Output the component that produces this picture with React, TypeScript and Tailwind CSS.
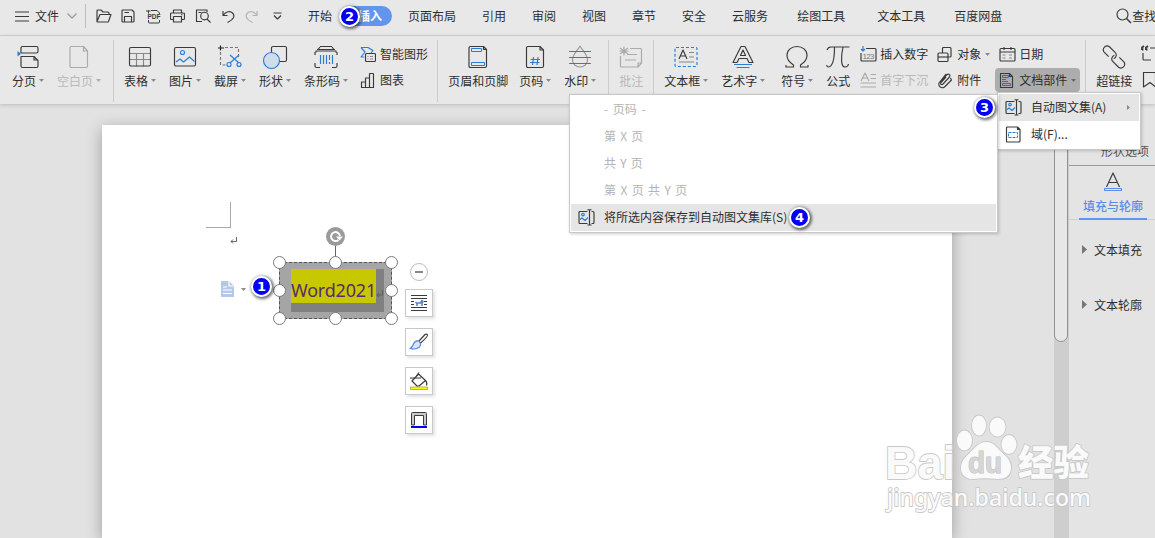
import React from "react";

type P = { children?: React.ReactNode; className?: string };

function Svg({ w, h, children, className = "" }: P & { w: number; h: number }) {
  return (
    <svg width={w} height={h} viewBox={`0 0 ${w} ${h}`} fill="none" stroke="#3a3a3a" strokeWidth="1.15" strokeLinejoin="round" className={`block shrink-0 ${className}`}>
      {children}
    </svg>
  );
}

const BLUE = "#2b7cd3";

function Arrow({ className = "" }: P) {
  return (
    <svg width="5" height="3" viewBox="0 0 5 3" className={`block shrink-0 ${className}`}>
      <path d="M0 0h5L2.500 3z" fill="#8a8a8a" />
    </svg>
  );
}

function Tool({ icon, label, arrow, disabled, className = "" }: { icon: React.ReactNode; label: string; arrow?: boolean; disabled?: boolean; className?: string }) {
  return (
    <div className={`flex shrink-0 flex-col items-center pt-[9px] ${className}`}>
      <div className="flex h-6 items-start justify-center">{icon}</div>
      <div className={`mt-[3px] flex h-[17px] items-center gap-[3px] leading-[17px] ${disabled ? "text-[#b9b9b9]" : ""}`}>
        <span>{label}</span>
        {arrow && <Arrow className={disabled ? "opacity-60" : ""} />}
      </div>
    </div>
  );
}

function Divider({ className = "" }: P) {
  return <div className={`mt-1 h-[62px] w-px shrink-0 bg-[#cccccc] ${className}`} />;
}

function SmallTool({ icon, label, arrow, className = "" }: { icon: React.ReactNode; label: string; arrow?: boolean; className?: string }) {
  return (
    <div className={`flex h-6 items-center ${className}`}>
      <div className="flex w-5 shrink-0 items-center">{icon}</div>
      <span className="-mt-[2px] leading-[17px]">{label}</span>
      {arrow && <Arrow className="ml-1" />}
    </div>
  );
}

function Badge({ n, className = "" }: { n: number; className?: string }) {
  return (
    <div className={`absolute z-30 flex size-[21px] items-center justify-center rounded-full border-2 border-white bg-[#0000f5] font-['DejaVu_Sans'] text-[13px] font-bold leading-none text-white shadow-[1px_1px_3px_1px_rgba(0,0,0,0.55)] ${className}`}>
      {n}
    </div>
  );
}

function TopBar() {
  return (
    <div className="flex h-9 shrink-0 items-start border-b border-[#d2d2d2]">
      <div className="flex h-8 w-[86px] shrink-0 items-center pl-[15px]">
        <Svg w={14} h={11}><path d="M0 1h14M0 5.500h14M0 10h14" /></Svg>
        <span className="ml-[6px]">文件</span>
        <Svg w={10} h={6} className="ml-[8px]"><path d="M.5.5 5 5 9.500.5" stroke="#999" /></Svg>
        <div className="ml-[8px] h-6 w-px shrink-0 bg-[#bdbdbd]" />
      </div>
      <div className="flex h-8 w-[222px] shrink-0 items-center pl-[10px]">
        <Svg w={16} h={14}><path d="M1 12.500V2q0-1 1-1h3l2 2h5q1 0 1 1v1M1 12.500 4 5.500h11l-2.500 7q-.2.500-1 .500H1.500q-.5 0-.5-.5z" /></Svg>
        <Svg w={14} h={14} className="ml-[9px]"><path d="M1 2q0-1 1-1h9l2 2v9q0 1-1 1H2q-1 0-1-1zM3.500 13V7.500h7V13M3.500 3.500H8" /></Svg>
        <svg width="15" height="15" viewBox="0 0 15 15" fill="none" stroke="#3a3a3a" strokeWidth="1" className="ml-[11px] block shrink-0">
          <path d="M2.500 4.500v-3M5 1.500h6L13.500 4v1M2.500 11v2q0 1 1 1h9q1 0 1-1v-2M0 2h4.500" />
          <text x="1.500" y="10" fontSize="6.500" fontWeight="bold" fill="#3a3a3a" stroke="none" textLength="13" fontFamily="Liberation Sans, sans-serif">PDF</text>
        </svg>
        <Svg w={15} h={14} className="ml-[9px]"><path d="M3.500 4V1h8v3M3 10.500H1.500q-1 0-1-1V5q0-1 1-1h12q1 0 1 1v4.500q0 1-1 1H12M3.500 7.500h8V13h-8zM11 5.700h1.500" /></Svg>
        <Svg w={16} h={14} className="ml-[10px]"><path d="M12 3V1H1.500v11.500H7M3.500 3.500h3" /><circle cx="9.500" cy="7" r="3.800" /><path d="m12 10 3.500 3.500" /></Svg>
        <Svg w={13} h={13} className="ml-[11px]"><path d="M1 1v4.500h4.500M1 5.500C4 1.500 8 .5 10.500 3s2 6-5 9.500" /></Svg>
        <Svg w={13} h={13} className="ml-[10px]"><path stroke="#b2b2b2" d="M12 1v4.500H7.500M12 5.500C9 1.500 5 .5 2.500 3s-2 6 5 9.500" /></Svg>
        <Svg w={9} h={8} className="ml-[15px]"><path d="M.5 1h8M1 3.500l3.500 3.500L8 3.500" /></Svg>
      </div>
      <div className="flex h-8 grow items-center whitespace-nowrap">
        <span>开始</span>
        <div className="ml-[11px] flex h-5 w-[49px] shrink-0 items-center justify-end rounded-full bg-[#6495ed] pr-[10px] font-bold text-white">插入</div>
        <div className="ml-4 flex gap-[26px]">
          <span>页面布局</span><span>引用</span><span>审阅</span><span>视图</span><span>章节</span><span>安全</span><span>云服务</span>
        </div>
        <span className="ml-[29px]">绘图工具</span>
        <span className="ml-8">文本工具</span>
        <span className="ml-[29px]">百度网盘</span>
        <Svg w={16} h={16} className="ml-[114px]"><circle cx="6.500" cy="6.500" r="5.500" /><path d="m10.500 10.500 4.500 4.500" strokeWidth="1.500" /></Svg>
        <span className="-mr-3">查找</span>
      </div>
    </div>
  );
}

function AutoTextIcon() {
  return (
    <Svg w={17} h={17}>
      <path d="M9.500 2.500H2q-1 0-1 1v10q0 1 1 1h7.500M13.500 2.500h1.500q1 0 1 1v10q0 1-1 1h-1.500M9.500.7h4M9.500 16h4M11.500.7V16" />
      <circle cx="5" cy="5.500" r="1.300" stroke={BLUE} />
      <path d="m2 10.500 2-1.500 3 2.500L10 8.500" stroke={BLUE} />
    </Svg>
  );
}

function Ribbon() {
  return (
    <div className="relative z-10 flex h-[68px] shrink-0 items-start overflow-hidden whitespace-nowrap bg-[#e8e8e8] pl-3 shadow-[0_1px_4px_rgba(0,0,0,0.18)]">
      <div className="flex shrink-0 gap-[13px]">
        <Tool label="分页" arrow icon={<Svg w={23} h={24}><path d="M4 8V3q0-1.500 1.500-1.500h14Q21 1.500 21 3v3.500Q21 8 19.500 8H4M4 11.500h13l4 4V21q0 1.500-1.500 1.500h-14Q4 22.500 4 21zM17 11.500V15h4" /><path d="M.5 6v5.500l3.500-2.700z" fill={BLUE} stroke="none" /></Svg>} />
        <Tool label="空白页" arrow disabled icon={<Svg w={20} h={24}><path stroke="#aaa" d="M1 3q0-1.500 1.500-1.500h12L18.500 6v15q0 1.500-1.500 1.500H2.500Q1 22.500 1 21zM14.500 1.500V6h4" /></Svg>} />
      </div>
      <Divider className="ml-3" />
      <div className="ml-[10px] flex shrink-0 gap-[13px]">
        <Tool label="表格" arrow icon={<Svg w={24} h={24}><path d="M1 8.500h22M1 14.500h22M8.500 8.500v13M15.500 8.500v13" stroke="#888" /><rect x="1.500" y="2.500" width="21" height="18.500" rx="1.500" /></Svg>} />
        <Tool label="图片" arrow icon={<Svg w={24} h={24}><rect x="1.500" y="2.500" width="21" height="18.500" rx="1.500" /><circle cx="9.500" cy="7.500" r="2" stroke={BLUE} /><path d="m3 17 4-3 3.500 3 6-5 5 4.500" stroke={BLUE} /></Svg>} />
        <Tool label="截屏" arrow icon={<Svg w={26} h={24}><path d="M1 3h6M3.500.5v5" stroke="#222" /><path d="M8 2.500h13.500V12M3.500 7v13h7" stroke="#777" strokeDasharray="3 2" /><path d="m13 10 9 8M22 10l-9 8" stroke={BLUE} /><circle cx="12" cy="19.500" r="2" stroke={BLUE} /><circle cx="22" cy="19.500" r="2" stroke={BLUE} /></Svg>} />
        <Tool label="形状" arrow icon={<Svg w={26} h={25}><rect x="9.500" y="1.500" width="15" height="15" rx="1.500" /><circle cx="9.500" cy="15.500" r="8" stroke={BLUE} fill="#cfdcea" /></Svg>} />
        <Tool label="条形码" arrow icon={<Svg w={24} h={24}><path d="M2 7.500V6h20v1.500M3 4.500h18M6 2l-2 2.500M18 2l2 2.500M6 1.500h12M1 7v3M23 7v3M1 18v3q0 1.500 1.500 1.500H6M23 18v3q0 1.500-1.500 1.500H18" /><path d="M6.500 10v9M9.500 10v9M12.500 10v9M15.500 10v5M15.500 17v2M18.500 10v9" stroke={BLUE} /></Svg>} />
      </div>
      <div className="ml-3 flex shrink-0 flex-col gap-[2px] pt-[6px]">
        <SmallTool label="智能图形" icon={<Svg w={16} h={17}><path d="M1 1.500h7l5 3-2 2.500M1 1.500 5 6l-4 5h3" stroke={BLUE} /><rect x="5.500" y="7.500" width="10" height="8" rx="1" fill="#e8e8e8" /><path d="M7.500 10.500h1M10 10.500h3M7.500 13h1M10 13h3" stroke="#888" /></Svg>} />
        <SmallTool label="图表" icon={<Svg w={16} h={17}><path d="M1.500 15.500V10h4v5.500M5.500 15.500V6h4v9.500M9.500 15.500V2q0-.5.5-.5h3q.5 0 .5.500v13.500M1 15.500h13" /></Svg>} />
      </div>
      <Divider className="ml-[9px]" />
      <div className="ml-[10px] flex shrink-0 gap-[11px]">
        <Tool label="页眉和页脚" icon={<Svg w={20} h={24}><path d="M1 3q0-1.500 1.500-1.500h13l3 3V21q0 1.500-1.500 1.500H2.500Q1 22.500 1 21z" /><path d="M3.500 3.500h10v3h-10zM3.500 17.500h13v3h-13z" stroke={BLUE} strokeWidth="1" /><path d="M15.500 1.500v3h3" /></Svg>} />
        <Tool label="页码" arrow icon={<Svg w={20} h={24}><path d="M1.500 3q0-1.500 1.500-1.500h12L18.500 5v16q0 1.500-1.500 1.500H3Q1.500 22.500 1.500 21zM15 1.500V5h3.500" /><path d="m8.500 12-1 8M13 12l-1 8M5.500 14.500H15M5 17.500h9.500" stroke={BLUE} /></Svg>} />
        <Tool label="水印" arrow className="ml-[2px]" icon={<Svg w={24} h={24}><path d="M12 1C10 5 4.500 9.500 4.500 15c0 4 3.500 7 7.500 7s7.500-3 7.500-7C19.500 9.500 14 5 12 1z" stroke="#999" /><path d="M1 6.500h22M1 12.500h22M1 18.500h22" stroke={BLUE} /></Svg>} />
      </div>
      <Divider className="ml-3" />
      <Tool label="批注" disabled className="ml-[10px]" icon={<Svg w={24} h={24}><path stroke="#aaa" d="M11 3.500h10.500q1 0 1 1V18l-3.500 4H2.500q-1 0-1-1V11M19 22v-4h3.500M8 9.500h10M6 15h11M5 1.500v9M1 3l8 6M9 3 1 9M.5 6h9" /></Svg>} />
      <Divider className="ml-[10px]" />
      <Tool label="文本框" arrow className="ml-[10px]" icon={<Svg w={24} h={24}><rect x="1" y="2.500" width="22" height="19" rx="1" stroke={BLUE} strokeDasharray="3 2" /><path d="m5 14 4-9 4 9M6.500 11h5" /><path d="M15 7.500h5M15 12h5M5 17h15" stroke="#888" /></Svg>} />
      <Tool label="艺术字" arrow className="ml-[13px]" icon={<Svg w={24} h={24}><path d="M2 17.500 10 1.500h4l8 16h-4l-2-4H8l-2 4zM9.500 10.500h5L12 5z" /><path d="M3 19.500h18M5.500 22.500h13" stroke={BLUE} /></Svg>} />
      <Tool label="符号" arrow className="ml-4" icon={<Svg w={24} h={24}><path d="M1 20v2h7.500v-2C4.500 17.500 2 14.500 2 10.500 2 5 6.500 1.500 12 1.500S22 5 22 10.500c0 4-2.500 7-6.500 9.500v2H23v-2" /></Svg>} />
      <Tool label="公式" className="ml-[13px]" icon={<Svg w={24} h={24}><path d="M1 5q1-3 4-3h18.500M8.500 2C8.500 12 7 21.500 2.500 22q-2 0-1.500-2M17 2c-2 9-2.500 20 2 20q3 0 3.500-3" /></Svg>} />
      <div className="ml-[10px] flex shrink-0 flex-col gap-[2px] pt-[6px]">
        <SmallTool label="插入数字" icon={<Svg w={17} h={17}><path d="M6 2.500h9q1 0 1 1V14q0 1-1 1H2q-1 0-1-1V7" /><path d="M3 0v5M1 3l2 2 2-2" stroke={BLUE} /><text x="2.500" y="12.500" fontSize="8" fill="#777" stroke="none" textLength="12" fontFamily="Liberation Sans, sans-serif">123</text></Svg>} />
        <SmallTool className="text-[#b9b9b9]" label="首字下沉" icon={<Svg w={17} h={17}><path stroke="#aaa" d="m1 9 4-8 4 8M2.500 6h5M10.500 2.500H16M10.500 6.500H16M.5 11H16M.5 15H16" /></Svg>} />
      </div>
      <div className="ml-[9px] flex shrink-0 flex-col gap-[2px] pt-[6px]">
        <SmallTool label="对象" arrow icon={<Svg w={16} h={17}><path d="M5.500 7V2.500q0-1 1-1H13q1 0 1 1V10q0 1-1 1h-2" /><rect x="1" y="7" width="10" height="8.500" rx="1" /><path d="M1 11h10" /></Svg>} />
        <SmallTool label="附件" icon={<Svg w={16} h={17}><path d="m3 10 6.500-7c2-2 4.500 0 3 2L6 12c-1.500 1.500-3-.2-2-1.500l5-5.500M13.500 6l1 2-7 7c-3 2-6.500-.5-5.500-4L9 2" /></Svg>} />
      </div>
      <div className="ml-[5px] flex w-[85px] shrink-0 flex-col gap-[2px] pt-[6px]">
        <SmallTool className="pl-1" label="日期" icon={<Svg w={17} h={17}><rect x="1" y="2.500" width="15" height="12.500" rx="1" /><path d="M1 6h15M5 1v3M12 1v3" /><path d="M3.500 9h3M10 9h3M3.500 12h3M10 12h3" stroke="#888" /></Svg>} />
        <SmallTool className="rounded bg-[#adadad] pl-1 [&>svg]:brightness-75" label="文档部件" arrow icon={<Svg w={15} h={17}><path d="M1.500 1.500h9l3 3v11h-12zM10.500 1.500v3h3" /><path d="M3.500 3.500h6v2h-6zM3.500 11.500h8v2h-8zM3 7.500h4M3 9.500h6" stroke="#2470c8" strokeWidth="1" /></Svg>} />
      </div>
      <Divider className="ml-[5px]" />
      <Tool label="超链接" className="ml-[10px]" icon={<Svg w={24} h={24}><g transform="rotate(45 12 12)"><path d="M8 15.500H1.500a3.800 3.800 0 0 1 0-7.500h8a3.800 3.800 0 0 1 3.500 5.500M16 8.500h6.500a3.800 3.800 0 0 1 0 7.500h-8A3.800 3.800 0 0 1 11 10.500" /></g></Svg>} />
      <div className="ml-[9px] flex shrink-0 flex-col gap-[10px] pt-[9px]">
        <Svg w={20} h={17}><path d="M1 5V2.500L3 1M5 5V2.500L7 1M1 4.500h1.500M5 4.500h1.500" strokeWidth="1.800" /><path d="M9 3h10M2 8v6q0 1 1 1h7" /></Svg>
        <Svg w={20} h={17}><path d="M2.500.5h12V15l-5.500-4.500L2.500 15z" /></Svg>
      </div>
    </div>
  );
}

function MenuRow({ icon, children, className = "" }: P & { icon?: React.ReactNode }) {
  return (
    <div className={`flex h-[27px] items-center leading-[17px] ${className}`}>
      <div className="flex w-[26px] shrink-0">{icon}</div>
      <div className="-mt-[2px]">{children}</div>
    </div>
  );
}

function Handle({ className = "" }: P) {
  return <div className={`absolute size-[13px] rounded-full border border-[#7a7a7a] bg-white ${className}`} />;
}

function SelectedBox() {
  return (
    <div className="absolute left-[279px] top-[262px] h-[57px] w-[113px] border border-dashed border-[#555] bg-[#a5a5a5]">
      <div className="ml-[11px] mt-[6px] h-[43px] w-[93px] bg-[#808080]">
        <div className="flex h-[34px] items-end">
          <div className="h-[34px] w-[85px] bg-[#c8c800] pt-[8px] font-['Noto_Sans'] text-[18px] leading-[27px] tracking-[-0.2px] text-[#5b2a72]">Word2021</div>
          <svg width="8" height="10" viewBox="0 0 8 10" fill="none" stroke="#5d5d5d" className="mb-1"><path d="M6.500 1v5H1M3 4 1 6l2 2" /></svg>
        </div>
      </div>
      <div className="absolute left-[55px] top-[-17px] h-4 w-px bg-[#666]" />
      <svg width="19" height="19" viewBox="0 0 19 19" className="absolute left-[46px] top-[-36px]">
        <circle cx="9.500" cy="9.500" r="9.500" fill="#9a9a9a" />
        <path d="M12.500 13a4.500 4.500 0 1 1 1.500-4" fill="none" stroke="#fff" strokeWidth="2" />
        <path d="M10 9.500h7l-3.500 4z" fill="#fff" />
      </svg>
      <Handle className="left-[-7px] top-[-7px]" />
      <Handle className="left-[49px] top-[-7px]" />
      <Handle className="left-[105px] top-[-7px]" />
      <Handle className="left-[-7px] top-[21px]" />
      <Handle className="left-[105px] top-[21px]" />
      <Handle className="left-[-7px] top-[49px]" />
      <Handle className="left-[49px] top-[49px]" />
      <Handle className="left-[105px] top-[49px]" />
    </div>
  );
}

function FloatButton({ children }: P) {
  return <div className="flex size-7 items-center justify-center border border-[#c8c8c8] bg-white shadow-[2px_2px_3px_rgba(0,0,0,0.12)]">{children}</div>;
}

function FloatTools() {
  return (
    <div className="absolute left-[405px] top-[263px] flex flex-col items-center">
      <div className="flex size-[18px] items-center justify-center rounded-full border border-[#bcbcbc] bg-white"><div className="h-[2px] w-[8px] bg-[#888]" /></div>
      <div className="mt-2 flex flex-col gap-[11px]">
        <FloatButton>
          <Svg w={18} h={18}><path d="M1 1.500h16M1 4.500h16M1 7.500h3M14 7.500h3M1 10.500h3M14 10.500h3M1 13.500h16M1 16.500h16" strokeWidth="1" /><path d="M5 6.500h8.500V12.500H5z" fill="#fff" stroke="none" /><path d="m5.500 8 1 1h4l1.500-2.500 1 1-1 1.500v3M7 9v3" stroke="#5585d6" strokeWidth="1.600" /></Svg>
        </FloatButton>
        <FloatButton>
          <Svg w={20} h={18}><path d="m10 8 6-6.500q2-1 2.500.5t-7.500 8.500z" /><path d="M10 8q-4-1-5.500 3-1 3-3.500 4.500 6 1.500 9.500-1.500 1.500-2 1-3.500z" stroke="#5585d6" fill="#dae7fb" /></Svg>
        </FloatButton>
        <FloatButton>
          <Svg w={20} h={19}><path d="m9.500 2 7 6.500-6.500 5.500H8L3 9z" /><path d="M1 6h11M16.500 8.500q2 2 1 5M7.500 4 10 .5" /><rect x="1.500" y="15" width="17" height="2.500" fill="#ff0" stroke="#888800" strokeWidth=".6" /></Svg>
        </FloatButton>
        <FloatButton>
          <Svg w={18} h={18}><path strokeWidth="1" fill="#c9c9c9" d="M1.500 14V2.500q0-1 1-1h13q1 0 1 1V14h-3V4.500h-9V14z" /><path d="M1 16h16" stroke="#0000f5" strokeWidth="2" /></Svg>
        </FloatButton>
      </div>
    </div>
  );
}

function Watermark() {
  return (
    <svg width="220" height="110" viewBox="880 405 220 110" className="absolute left-[880px] top-[405px] z-20" fill="#fafafa" stroke="#c9c9c9" strokeWidth="1.800" paintOrder="stroke" strokeLinejoin="round">
      <text x="885" y="479" fontFamily="Liberation Sans, sans-serif" fontWeight="bold" fontSize="47" textLength="70" lengthAdjust="spacingAndGlyphs">Bai</text>
      <ellipse cx="964.500" cy="440.500" rx="7.500" ry="10" />
      <ellipse cx="979" cy="425.500" rx="7" ry="10" />
      <ellipse cx="997.500" cy="427" rx="8" ry="9.500" />
      <ellipse cx="1009" cy="444.500" rx="7.500" ry="9.500" />
      <path d="M986.500 442c8 0 11 7 18 13 10 8 9 24-6 24-7 0-16-1.500-24 0-14 1-18-13-8-23 7-6 11-14 20-14z" />
      <text x="968" y="473" fontFamily="Liberation Sans, sans-serif" fontWeight="bold" fontSize="29" textLength="34" lengthAdjust="spacingAndGlyphs" fill="#d6d6d6" stroke="#bcbcbc" strokeWidth="1">du</text>
      <text x="1018" y="476" fontFamily="Noto Sans CJK SC, sans-serif" fontWeight="900" fontSize="36" textLength="71" lengthAdjust="spacingAndGlyphs">经验</text>
      <text x="887" y="506" fontFamily="Noto Sans, sans-serif" fontWeight="500" fontSize="24" textLength="204" lengthAdjust="spacingAndGlyphs">jingyan.baidu.com</text>
    </svg>
  );
}

export default function App() {
  return (
    <div className="relative flex h-[538px] w-[1155px] flex-col overflow-hidden bg-[#e8e8e8] font-['Noto_Sans_CJK_SC',sans-serif] text-[12px] text-[#2e2e2e]">
      <TopBar />
      <Ribbon />
      <div className="flex grow items-stretch bg-[#e2e2e2]">
        <div className="flex w-[1054px] shrink-0 pl-[102px] pt-[21px]">
          <div className="w-[850px] bg-white shadow-[0_4px_15px_rgba(0,0,0,0.3)]">
            <div className="ml-[104px] mt-[77px] h-[26px] w-[25px] border-b border-r border-[#aaa]" />
            <svg width="8" height="9" viewBox="0 0 8 9" fill="none" stroke="#666" className="ml-[128px] mt-2"><path d="M6.500 1v4.500H1M3 3.500l-2 2 2 2" /></svg>
            <div className="ml-[119px] mt-[36px] flex items-center gap-[7px]">
              <svg width="13" height="16" viewBox="0 0 13 16"><path d="M0 0h8l5 5v11H0z" fill="#b4c8e8" /><path d="M8 0v5h5M2 6h4M2 9h9M2 12.500h9" fill="none" stroke="#fff" strokeWidth="1.200" /></svg>
              <Arrow />
            </div>
          </div>
        </div>
        <div className="w-[15px] shrink-0 bg-[#cecece]">
          <div className="h-[238px] w-[14px] rounded-b-[7px] border border-[#929292] bg-[#e7e7e7]" />
        </div>
        <div className="flex grow flex-col bg-[#e4e4e4]">
          <div className="flex h-[62px] items-end whitespace-nowrap border-b border-[#999] pb-[6px] pl-8 leading-[17px] text-[#555]">形状选项</div>
          <div className="flex h-[54px] border-b border-[#d0d0d0] pl-[10px]">
            <div className="-mb-px flex w-[68px] flex-col items-center border-b-2 border-[#6495ed] pt-[6px] text-[#5b8de8]">
              <Svg w={18} h={20}><path d="M2.500 15 9 1l6.500 14M5 10.500h8" /><rect x=".5" y="16.500" width="17" height="2" stroke="#5b8de8" /></Svg>
              <span className="mt-[5px] whitespace-nowrap font-medium leading-[17px]">填充与轮廓</span>
            </div>
          </div>
          <div className="mt-[21px] flex h-[17px] items-center gap-[7px] whitespace-nowrap pl-[13px]">
            <svg width="5" height="9" viewBox="0 0 5 9"><path d="M0 0v9l5-4.500z" fill="#777" /></svg>文本填充
          </div>
          <div className="mt-[38px] flex h-[17px] items-center gap-[7px] whitespace-nowrap pl-[13px]">
            <svg width="5" height="9" viewBox="0 0 5 9"><path d="M0 0v9l5-4.500z" fill="#777" /></svg>文本轮廓
          </div>
        </div>
      </div>

      <SelectedBox />
      <FloatTools />

      <div className="absolute left-[997px] top-[92px] z-20 w-[144px] border border-[#c8c8c8] bg-white p-px shadow-[1px_1px_3px_rgba(0,0,0,0.2)]">
        <div className="flex items-center bg-[#e5e5e5]">
          <MenuRow className="grow pl-[6px]" icon={<AutoTextIcon />}>自动图文集(A)</MenuRow>
          <svg width="3" height="5" viewBox="0 0 3 5" className="mr-[9px]"><path d="M0 0v5l3-2.500z" fill="#888" /></svg>
        </div>
        <MenuRow className="pl-[6px]" icon={<Svg w={17} h={17}><path d="M1.500 2q0-1 1-1h10L15 3.500V15q0 1-1 1H2.500q-1 0-1-1zM12.500 1v2.500H15" /><rect x="3.500" y="6.500" width="9" height="5" stroke={BLUE} strokeWidth="1" strokeDasharray="3 1" /></Svg>}>域(F)...</MenuRow>
      </div>

      <div className="absolute left-[569px] top-[94px] z-20 w-[429px] border border-[#c8c8c8] bg-white p-px shadow-[1px_1px_3px_rgba(0,0,0,0.2)]">
        <MenuRow className="pl-[7px] text-[#b4b4b4] [word-spacing:2px]">- 页码 -</MenuRow>
        <MenuRow className="pl-[7px] text-[#b4b4b4] [word-spacing:1.500px]">第 X 页</MenuRow>
        <MenuRow className="pl-[7px] text-[#b4b4b4] [word-spacing:1.500px]">共 Y 页</MenuRow>
        <MenuRow className="pl-[7px] text-[#b4b4b4] [word-spacing:1.700px]">第 X 页 共 Y 页</MenuRow>
        <MenuRow className="bg-[#e5e5e5] pl-[7px]" icon={<AutoTextIcon />}>将所选内容保存到自动图文集库(S)</MenuRow>
      </div>

      <Badge n={1} className="left-[251px] top-[276px]" />
      <Badge n={2} className="left-[339px] top-[6px]" />
      <Badge n={3} className="left-[974px] top-[97px]" />
      <Badge n={4} className="left-[789px] top-[207px]" />
      <Watermark />
    </div>
  );
}
